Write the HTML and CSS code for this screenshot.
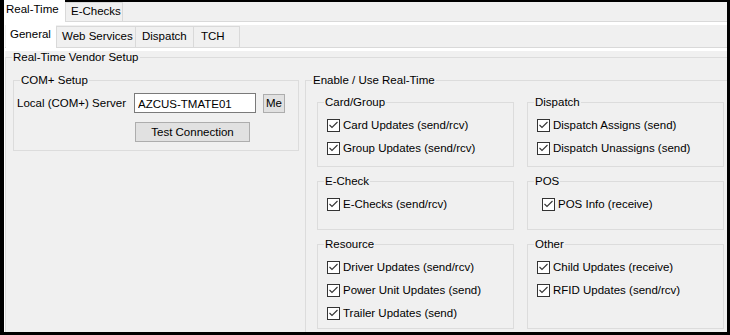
FILE: index.html
```html
<!DOCTYPE html>
<html lang="en">
<head>
  <meta charset="UTF-8">
  <title>Real-Time Setup</title>
  <link rel="stylesheet" href="styles.css">
</head>
<body>

  <div class="window">
    <div class="tabstrip outer-strip">
      <div class="tab active rt-tab">Real-Time</div>
      <div class="tab echeck-tab">E-Checks</div>
    </div>

    <div class="outer-page">
      <div class="tabstrip inner-strip">
        <div class="tab active general-tab">General</div>
        <div class="tab web-tab">Web Services</div>
        <div class="tab dispatch-tab">Dispatch</div>
        <div class="tab tch-tab">TCH</div>
      </div>

      <div class="inner-page">
        <fieldset class="group vendor">
          <legend>Real-Time Vendor Setup</legend>
          <div class="vendor-body">

            <!-- COM+ box -->
            <fieldset class="group com">
              <legend>COM+ Setup</legend>
              <div class="com-body">
                <div class="server-row">
                  <label class="server-label" for="server">Local (COM+) Server</label>
                  <input type="text" id="server" class="server-input" value="AZCUS-TMATE01">
                  <button class="btn me-btn">Me</button>
                </div>
                <div class="test-row">
                  <button class="btn test-btn">Test Connection</button>
                </div>
              </div>
            </fieldset>

            <!-- Enable / Use box -->
            <fieldset class="group enable">
              <legend>Enable / Use Real-Time</legend>
              <div class="enable-grid">

                <fieldset class="group">
                  <legend>Card/Group</legend>
                  <div class="opts">
                    <div class="opt"><svg class="check" viewBox="0 0 13 13"><rect x="0.5" y="0.5" width="12" height="12"/><path d="M2.5 6 L5 8.5 L10.5 3"/></svg>Card Updates (send/rcv)</div>
                    <div class="opt"><svg class="check" viewBox="0 0 13 13"><rect x="0.5" y="0.5" width="12" height="12"/><path d="M2.5 6 L5 8.5 L10.5 3"/></svg>Group Updates (send/rcv)</div>
                  </div>
                </fieldset>

                <fieldset class="group">
                  <legend>Dispatch</legend>
                  <div class="opts">
                    <div class="opt"><svg class="check" viewBox="0 0 13 13"><rect x="0.5" y="0.5" width="12" height="12"/><path d="M2.5 6 L5 8.5 L10.5 3"/></svg>Dispatch Assigns (send)</div>
                    <div class="opt"><svg class="check" viewBox="0 0 13 13"><rect x="0.5" y="0.5" width="12" height="12"/><path d="M2.5 6 L5 8.5 L10.5 3"/></svg>Dispatch Unassigns (send)</div>
                  </div>
                </fieldset>

                <fieldset class="group">
                  <legend>E-Check</legend>
                  <div class="opts">
                    <div class="opt"><svg class="check" viewBox="0 0 13 13"><rect x="0.5" y="0.5" width="12" height="12"/><path d="M2.5 6 L5 8.5 L10.5 3"/></svg>E-Checks (send/rcv)</div>
                  </div>
                </fieldset>

                <fieldset class="group">
                  <legend>POS</legend>
                  <div class="opts pos-opts">
                    <div class="opt"><svg class="check" viewBox="0 0 13 13"><rect x="0.5" y="0.5" width="12" height="12"/><path d="M2.5 6 L5 8.5 L10.5 3"/></svg>POS Info (receive)</div>
                  </div>
                </fieldset>

                <fieldset class="group">
                  <legend>Resource</legend>
                  <div class="opts">
                    <div class="opt"><svg class="check" viewBox="0 0 13 13"><rect x="0.5" y="0.5" width="12" height="12"/><path d="M2.5 6 L5 8.5 L10.5 3"/></svg>Driver Updates (send/rcv)</div>
                    <div class="opt"><svg class="check" viewBox="0 0 13 13"><rect x="0.5" y="0.5" width="12" height="12"/><path d="M2.5 6 L5 8.5 L10.5 3"/></svg>Power Unit Updates (send)</div>
                    <div class="opt"><svg class="check" viewBox="0 0 13 13"><rect x="0.5" y="0.5" width="12" height="12"/><path d="M2.5 6 L5 8.5 L10.5 3"/></svg>Trailer Updates (send)</div>
                  </div>
                </fieldset>

                <fieldset class="group">
                  <legend>Other</legend>
                  <div class="opts">
                    <div class="opt"><svg class="check" viewBox="0 0 13 13"><rect x="0.5" y="0.5" width="12" height="12"/><path d="M2.5 6 L5 8.5 L10.5 3"/></svg>Child Updates (receive)</div>
                    <div class="opt"><svg class="check" viewBox="0 0 13 13"><rect x="0.5" y="0.5" width="12" height="12"/><path d="M2.5 6 L5 8.5 L10.5 3"/></svg>RFID Updates (send/rcv)</div>
                  </div>
                </fieldset>

              </div>
            </fieldset>

          </div>
        </fieldset>
      </div>
    </div>
  </div>

</body>
</html>
```

FILE: styles.css
```css
/* General */
body {
  margin: 0;
  height: 335px;
  overflow: hidden;
  background-color: #000;
  font-family: "Liberation Sans", Arial, sans-serif;
  font-size: 11.5px;
  line-height: 15px;
  color: #000;
}

.window {
  margin-left: 4px;
  width: 723px;
  height: 332px;
  overflow: hidden;
  background-color: #f0f0f0;
}

/* Tabs */
.tabstrip {
  display: flex;
  align-items: flex-end;
  background-color: #f0f0f0;
  border-bottom: 1px solid #d9d9d9;
}

.tab {
  box-sizing: border-box;
  white-space: nowrap;
  border: 1px solid #d9d9d9;
  border-bottom: none;
  border-right: none;
}

.tab.active {
  position: relative;
  background-color: #fff;
  border: none;
  margin-bottom: -1px;
}

.outer-strip {
  border-top: 2px solid #000;
  height: 19px;
}

.outer-strip .tab {
  height: 19px;
  padding: 1px 0 0 5px;
}

.outer-strip .tab.active {
  height: 22px;
  margin-top: -2px;
  padding: 2px 0 0 2px;
}

.rt-tab { width: 61px; }
.echeck-tab { width: 58px; border-right: 1px solid #d9d9d9; }

.outer-page {
  background-color: #fff;
  padding: 3px 0 0 1px;
}

.inner-strip {
  height: 22px;
  padding-left: 1px;
}

.inner-strip .tab {
  height: 21px;
  padding: 2px 0 0 6px;
}

.inner-strip .tab.active {
  height: 24px;
  padding: 3px 0 0 4px;
}

.general-tab { width: 50px; }
.web-tab { width: 79px; padding-left: 5px !important; }
.dispatch-tab { width: 58px; }
.tch-tab { width: 47px; padding-left: 7px !important; border-right: 1px solid #d9d9d9 !important; }

.inner-page {
  background-color: #f0f0f0;
  border-top: 3px solid #fff;
  height: 300px;
}

/* Group boxes */
.group {
  box-sizing: border-box;
  margin: 0;
  padding: 0;
  min-width: 0;
  border: 1px solid #dcdcdc;
}

.group legend {
  margin-left: 6px;
  padding: 0 1px;
  line-height: 15px;
}

.vendor {
  width: 760px;
  height: 320px;
  margin-top: -1px;
}

.vendor-body {
  display: flex;
  align-items: flex-start;
  gap: 6px;
  padding: 8px 0 0 7px;
}

/* COM+ Setup */
.com {
  width: 286px;
  height: 78px;
  flex: none;
}

.com-body {
  padding: 5px 0 0 3px;
}

.server-row {
  display: flex;
  align-items: center;
  height: 20px;
}

.server-label {
  width: 117px;
  flex: none;
  white-space: nowrap;
  padding-top: 1px;
}

.server-input {
  box-sizing: border-box;
  width: 122px;
  height: 20px;
  margin: 0;
  padding: 1px 0 0 3px;
  border: 1px solid #7a7a7a;
  background-color: #fff;
  font: inherit;
  color: #000;
  outline: none;
}

.btn {
  box-sizing: border-box;
  margin: 0;
  padding: 0;
  border: 1px solid #adadad;
  background-color: #e1e1e1;
  font: inherit;
  color: #000;
  white-space: nowrap;
  overflow: hidden;
}

.me-btn {
  width: 22px;
  height: 19px;
  margin: 1px 0 0 7px;
  align-self: flex-start;
  text-align: left;
  padding-left: 2px;
}

.test-row {
  margin-top: 9px;
  padding-left: 118px;
}

.test-btn {
  width: 115px;
  height: 20px;
}

/* Enable / Use Real-Time */
.enable {
  width: 440px;
  height: 300px;
  flex: none;
}

.enable-grid {
  display: grid;
  grid-template-columns: 197px 197px;
  grid-template-rows: 72px 56px 92px;
  column-gap: 13px;
  row-gap: 7px;
  padding: 7px 0 0 11px;
}

.opts {
  padding: 4px 0 0 9px;
}

.pos-opts {
  padding-left: 14px;
}

.opt {
  display: flex;
  align-items: center;
  gap: 3px;
  height: 23px;
  white-space: nowrap;
}

.check {
  width: 13px;
  height: 13px;
  flex: none;
}

.check rect {
  fill: #fff;
  stroke: #333;
}

.check path {
  fill: none;
  stroke: #333;
  stroke-width: 1.1;
}
```
